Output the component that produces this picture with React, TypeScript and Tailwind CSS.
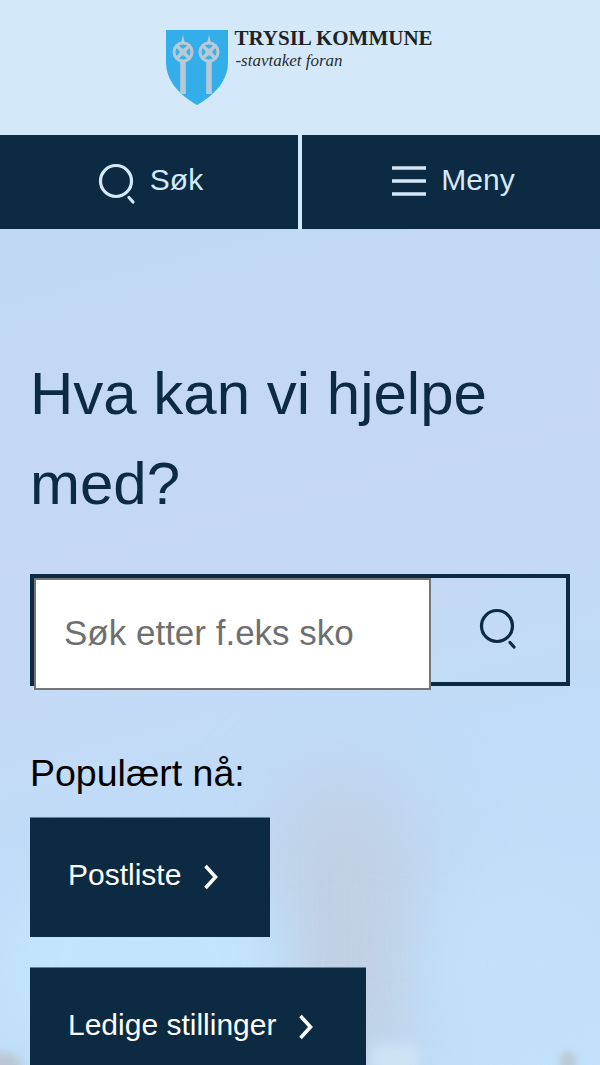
function SearchIcon({ className }: { className: string }) {
  return (
    <svg className={className} viewBox="0 0 40 42" fill="none" stroke="currentColor">
      <circle cx="18" cy="18" r="15.5" strokeWidth="3.2" />
      <path d="M31 34.5l4 4.5" strokeWidth="3.2" strokeLinecap="round" />
    </svg>
  );
}

function Chevron() {
  return (
    <svg className="w-[16px] h-[26px] ml-[22px] mt-[2px]" viewBox="0 0 16 26" fill="none" stroke="#ffffff" strokeWidth="3.6">
      <path d="M2.5 2l10 11-10 11" />
    </svg>
  );
}

function Pole({ x }: { x: number }) {
  return (
    <g>
      <path d={`M${x - 2.8} 16l2.8-11 2.8 11v48h-5.6z`} fill="#b9cad6" />
      <circle cx={x} cy="22" r="10.5" fill="#b9cad6" />
      <circle cx={x} cy="22" r="7.5" fill="#3fb0e6" />
      <path d={`M${x - 7} 15l14 14M${x + 7} 15l-14 14`} stroke="#b9cad6" strokeWidth="3.4" />
      <circle cx={x} cy="22" r="3.5" fill="#b9cad6" />
    </g>
  );
}

function Logo() {
  return (
    <div className="flex items-start">
      <svg className="w-[62px] h-[75px]" viewBox="0 0 62 75">
        <path d="M0 0h62v32c0 18-12 32-31 43C12 64 0 50 0 32z" fill="#33aeea" />
        <Pole x={17} />
        <Pole x={43} />
      </svg>
      <div className="ml-[6px] -mt-[3px]">
        <div className="font-['Liberation_Serif',serif] font-bold text-[21px] leading-[22px] text-[#1f2326] whitespace-nowrap">TRYSIL KOMMUNE</div>
        <div className="font-['Liberation_Serif',serif] italic text-[17px] leading-[23px] text-[#2a2d30] whitespace-nowrap ml-[1px]">-stavtaket foran</div>
      </div>
    </div>
  );
}

function LinkButton({ label, className }: { label: string; className: string }) {
  return (
    <a className={`flex items-center bg-[#0c2a42] text-white text-[30px] pl-[38px] pb-[3px] border-t border-[#5f7f9c] ${className}`}>
      <span className="pb-[4px]">{label}</span>
      <Chevron />
    </a>
  );
}

export default function App() {
  return (
    <div className="w-[600px] h-[1065px] overflow-hidden font-['Liberation_Sans',sans-serif] flex flex-col bg-[#d3e9f9]">
      <header className="h-[135px] shrink-0 flex items-start justify-center pt-[30px] pr-[1px]">
        <Logo />
      </header>

      <nav className="h-[94px] shrink-0 flex justify-between text-[#d3e9f9] text-[30px]">
        <button className="w-[298px] pl-[3px] bg-[#0c2a42] flex items-center justify-center gap-[12px]">
          <SearchIcon className="w-[40px] h-[42px] mt-[3px]" />
          <span className="pb-[6px]">Søk</span>
        </button>
        <button className="w-[298px] pl-[4px] bg-[#0c2a42] flex items-center justify-center gap-[14px]">
          <svg className="w-[36px] h-[32px] -mt-[3px]" viewBox="0 0 36 32" fill="none" stroke="currentColor" strokeWidth="3.6">
            <path d="M1 3h34M1 16h34M1 29h34" />
          </svg>
          <span className="pb-[6px]">Meny</span>
        </button>
      </nav>

      <main className="relative flex-1 overflow-hidden bg-[linear-gradient(165deg,#c0d8f4_0%,#c6d8f3_35%,#c0dcf8_65%,#c2e2fb_100%)] px-[30px]">
        {/* blurred backdrop photo */}
        <div className="absolute left-[270px] top-[540px] w-[150px] h-[320px] rounded-full bg-[#c0d0e4] blur-[40px]" />
        <div className="absolute right-0 top-[640px] w-[170px] h-[190px] rounded-full bg-[#c2e0f8] blur-[30px]" />
        <div className="absolute left-0 top-[640px] w-[280px] h-[190px] rounded-full bg-[#c2e5fc] blur-[30px]" />
        <div className="absolute left-[-18px] bottom-[-18px] w-[40px] h-[30px] rounded-full bg-[#b9c6d2] blur-[5px]" />
        <div className="absolute left-[370px] bottom-[-8px] w-[50px] h-[30px] rounded-full bg-[#cde3f5] blur-[6px]" />
        <div className="absolute left-[560px] bottom-[-8px] w-[16px] h-[22px] rounded-full bg-[#bccbda] blur-[3px]" />

        <div className="relative">
          <h1 className="pt-[120px] text-[60px] leading-[90px] text-[#0c2a42] font-normal">
            Hva kan vi hjelpe<br />med?
          </h1>

          <div className="mt-[45px] w-[540px] h-[112px] border-[4px] border-[#0c2a42] flex items-start">
            <div className="w-[397px] h-[112px] shrink-0 bg-white border-2 border-[#757575] flex items-center pl-[28px] pb-[2px] text-[35px] text-[#6f6f6f]">
              Søk etter f.eks sko
            </div>
            <div className="flex-1 h-full flex items-center justify-center text-[#0c2a42]">
              <SearchIcon className="w-[40px] h-[42px] mb-[2px] ml-[1px]" />
            </div>
          </div>

          <p className="mt-[64px] text-[37.5px] leading-[46px] text-black">Populært nå:</p>

          <div className="mt-[21px] flex flex-col items-start gap-[30px]">
            <LinkButton label="Postliste" className="w-[240px] h-[120px]" />
            <LinkButton label="Ledige stillinger" className="w-[336px] h-[120px]" />
          </div>
        </div>
      </main>
    </div>
  );
}
